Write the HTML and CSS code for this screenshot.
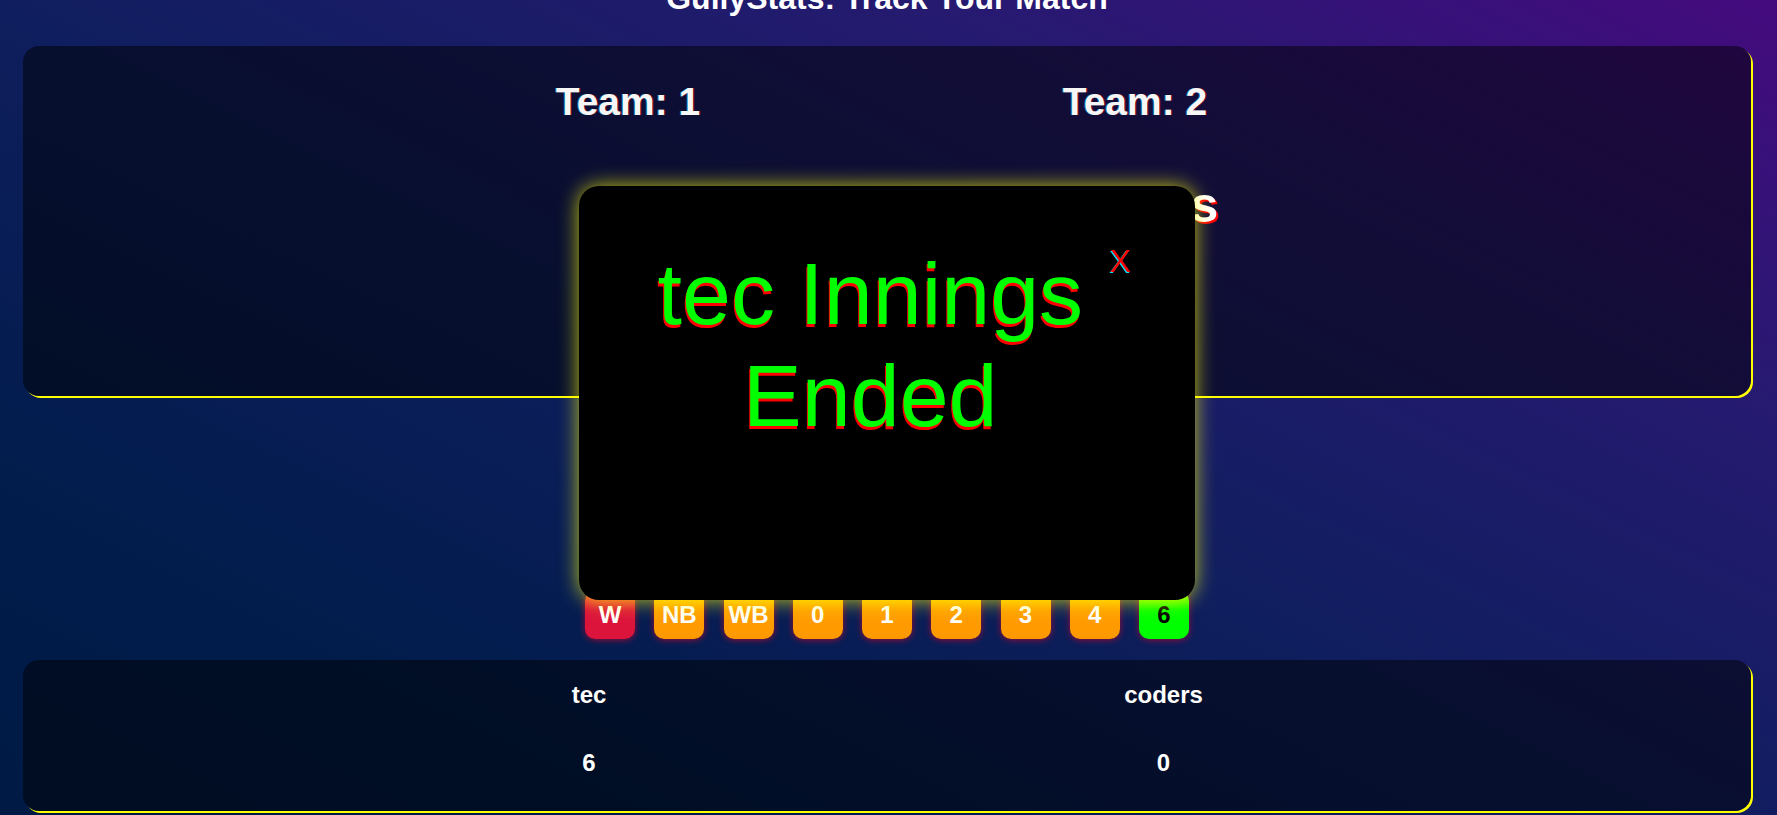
FILE: index.html
```html
<!DOCTYPE html>
<html lang="en">
<head>
<meta charset="utf-8">
<title>GullyStats</title>
<link rel="stylesheet" href="styles.css">
</head>
<body>
  <div class="app">
    <h1 class="title">GullyStats: Track Your Match</h1>

    <section class="panel scoreboard">
      <div class="cols">
        <h2 class="team">Team: 1</h2>
        <h2 class="team">Team: 2</h2>
      </div>
      <div class="cols score-row">
        <span class="big">6</span>
        <span class="big">0 Runs</span>
      </div>
    </section>

    <div class="spacer"></div>

    <div class="buttons">
      <button class="btn btn-w">W</button>
      <button class="btn">NB</button>
      <button class="btn">WB</button>
      <button class="btn">0</button>
      <button class="btn">1</button>
      <button class="btn">2</button>
      <button class="btn">3</button>
      <button class="btn">4</button>
      <button class="btn btn-six">6</button>
    </div>

    <section class="panel summary">
      <div class="sum-grid">
        <div class="sum-cell">tec</div>
        <div class="sum-cell">coders</div>
        <div class="sum-cell">6</div>
        <div class="sum-cell">0</div>
      </div>
    </section>
  </div>

  <div class="popup">
    <h2 class="popup-msg">tec Innings Ended</h2>
    <span class="close">X</span>
  </div>
</body>
</html>
```

FILE: styles.css
```css
* {
  box-sizing: border-box;
}

html,
body {
  margin: 0;
  height: 100%;
}

body {
  font-family: "Liberation Sans", Arial, sans-serif;
  color: #ffffff;
  background: linear-gradient(26deg, #001a45 0%, #011c4b 19%, #0f1e5e 48%, #251a70 75%, #440a7e 100%);
  overflow: hidden;
}

.app {
  padding: 0 26px 0 23px;
}

.title {
  margin: -20px 0 29px;
  font-size: 32px;
  font-weight: bold;
  line-height: normal;
  text-align: center;
}

.panel {
  background: rgba(0, 0, 0, 0.5);
  border-radius: 16px;
  box-shadow: 2px 2px 0 #ffff00;
}

.scoreboard {
  height: 350px;
  padding-top: 34px;
}

.cols {
  display: grid;
  grid-template-columns: 400px 400px;
  column-gap: 107px;
  justify-content: center;
  padding-right: 11px;
  text-align: center;
}

.team {
  margin: 0;
  font-size: 39px;
  font-weight: bold;
  line-height: normal;
  color: #f6f6f6;
  text-shadow: -1px 0 rgba(0, 220, 255, 0.45), 1px 0 rgba(255, 0, 0, 0.45);
}

.score-row {
  margin-top: 52px;
}

.big {
  font-size: 50px;
  font-weight: bold;
  line-height: normal;
  text-shadow: 2px 2px 0 #ff0000;
}

.spacer {
  height: 195px;
}

.buttons {
  display: flex;
  justify-content: center;
  gap: 19.25px;
}

.btn {
  width: 50px;
  height: 48px;
  padding: 0;
  border: none;
  border-radius: 10px;
  font-family: "Liberation Sans", Arial, sans-serif;
  font-size: 24px;
  font-weight: bold;
  color: #ffffff;
  display: flex;
  align-items: center;
  justify-content: center;
  background: linear-gradient(#ffc800 0%, #ff9e00 40%, #ff9800 100%);
  box-shadow: 0 1px 6px rgba(230, 0, 40, 0.65);
}

.btn-w {
  background: linear-gradient(#f0503a 0%, #dc143c 40%, #dc143c 100%);
}

.btn-six {
  color: #000000;
  background: linear-gradient(#99ff00 0%, #00ff00 40%, #00ff00 100%);
}

.summary {
  margin-top: 21px;
  height: 151px;
  padding-top: 21px;
}

.sum-grid {
  display: grid;
  grid-template-columns: 500px 500px;
  column-gap: 74.5px;
  row-gap: 40.4px;
  justify-content: center;
  padding-right: 21.5px;
  text-align: center;
}

.sum-cell {
  font-size: 24px;
  font-weight: bold;
  line-height: normal;
}

.popup {
  position: fixed;
  left: 579px;
  top: 186px;
  width: 616px;
  height: 414px;
  background: #000000;
  border-radius: 20px;
  box-shadow: 0 0 20px rgba(255, 255, 0, 0.75);
  display: flex;
  align-items: flex-start;
  gap: 10px;
  padding: 57px 64px 0 62px;
}

.popup-msg {
  flex: 1;
  margin: 0;
  font-size: 88px;
  font-weight: normal;
  line-height: normal;
  color: #00ff00;
  text-align: center;
  text-shadow: -1px 3px 0 #ff0000;
}

.close {
  font-size: 32px;
  line-height: normal;
  color: #ff0000;
  text-shadow: -1px 1px 0 #00e5ff;
  cursor: pointer;
}
```
